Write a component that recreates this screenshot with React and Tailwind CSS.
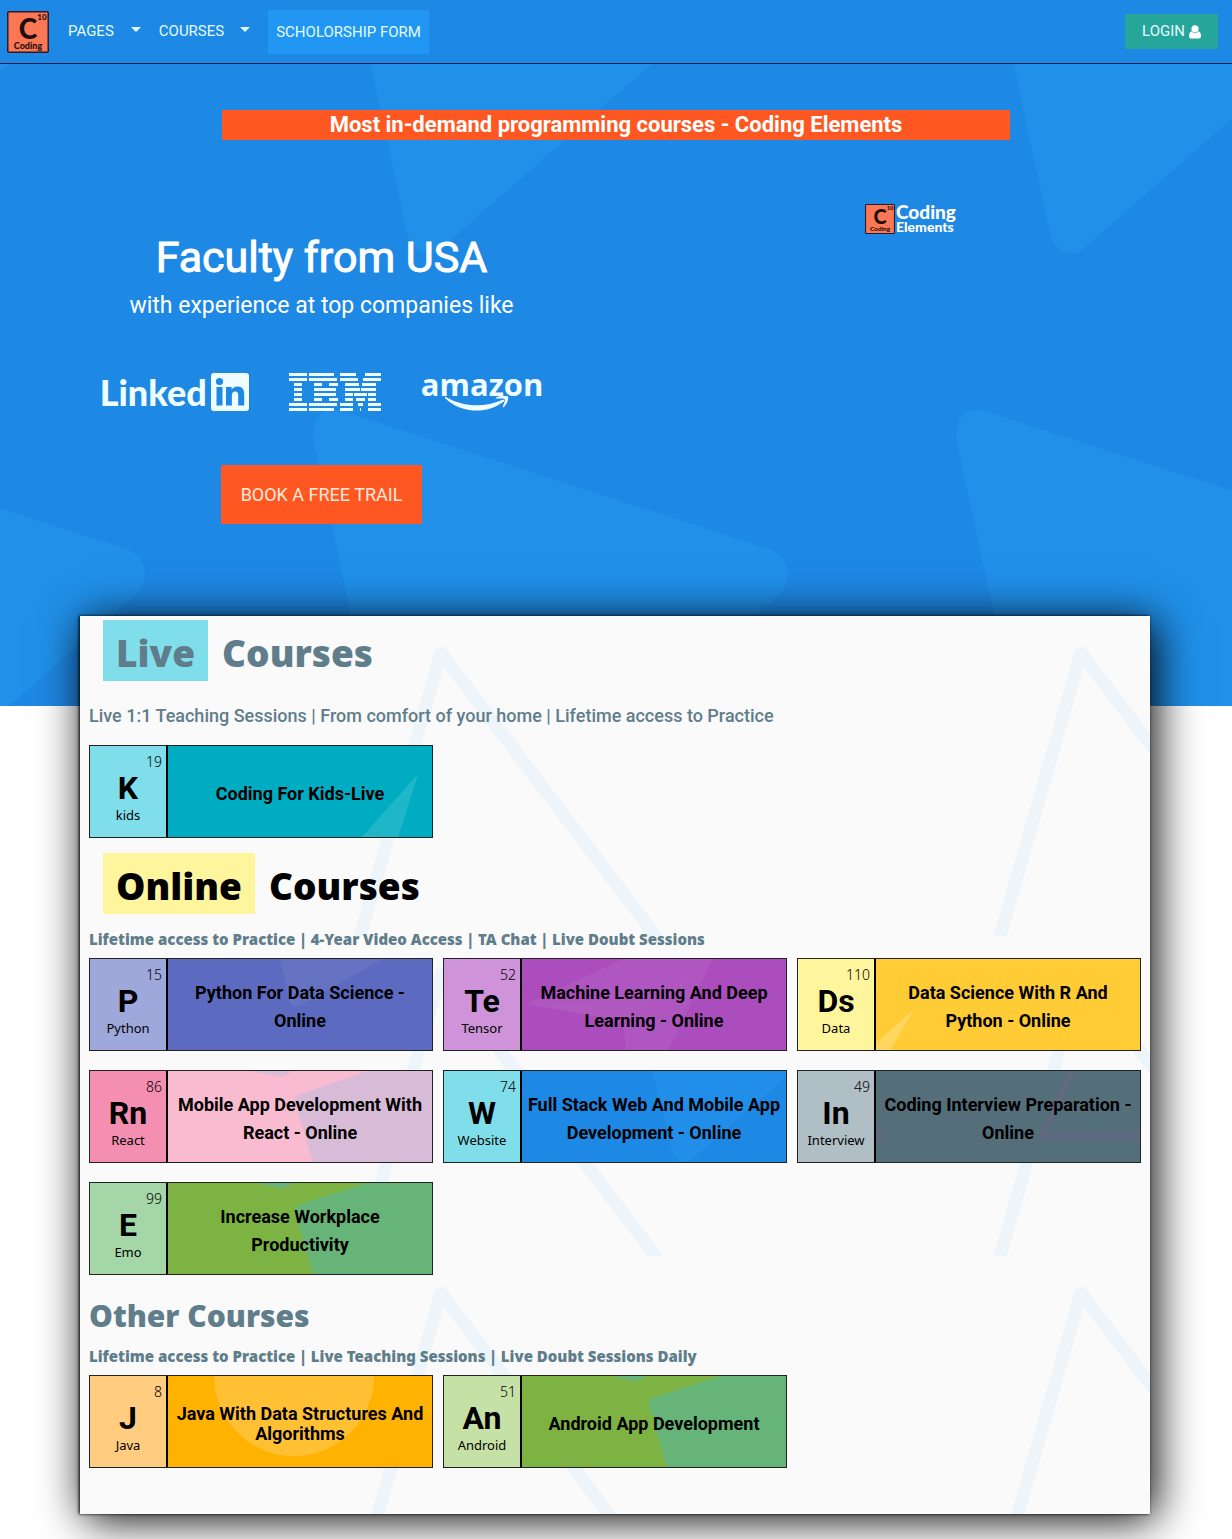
import React from "react";

const OVERLAYS = {
  shard: <path d="M250 28 L193 92 H230 Z" fill="#1fb6ca" />,
  wedge: <path d="M112 0 L122 43 Q125 51 133 46 L215 0 Z" fill="#6673c3" />,
  star: (
    <g fill="#b35fc4" fillOpacity="0.5">
      <path d="M4 45 L101 0 H191 L146 92 H104 L101 62 Z" />
      <path d="M191 0 L101 62 L4 45 L146 40 Z" fillOpacity="0.3" />
    </g>
  ),
  corner: <path d="M38 50 L0 84 V92 H14 Z" fill="#ffd75e" />,
  pinkTile: (
    <path d="M199 0 L130 24 Q126 26 127 30 L145 92 H266 V0 Z M82 0 L112 5 Q118 6 124 0 Z" fill="#d8bbd6" />
  ),
  greenTile: (
    <path d="M199 0 L130 22 Q126 24 127 28 L145 92 H266 V0 Z M90 0 L112 5 Q118 6 124 0 Z" fill="#66b478" />
  ),
  sail: <path d="M130 0 L151 82 Q155 92 162 92 L170 88 L266 4 V0 Z" fill="#218fe9" />,
  outline: (
    <g stroke="#5f6a80" strokeWidth="7" fill="none">
      <path d="M196 0 L166 65 H266" />
      <path d="M0 57 L10 65 L0 72 Z" fill="#5f6a80" stroke="none" />
    </g>
  ),
  disc: <circle cx="126" cy="0" r="80" fill="#ffc034" />,
};

const LIVE = [
  { number: 19, symbol: "K", name: "kids", title: "Coding For Kids-Live", left: "bg-[#80deea]", right: "bg-[#00acc1]", art: "shard" },
];

const ONLINE = [
  { number: 15, symbol: "P", name: "Python", title: "Python For Data Science - Online", left: "bg-[#9fa8da]", right: "bg-[#5c6bc0]", art: "wedge" },
  { number: 52, symbol: "Te", name: "Tensor", title: "Machine Learning And Deep Learning - Online", left: "bg-[#ce93d8]", right: "bg-[#ab4dbc]", art: "star" },
  { number: 110, symbol: "Ds", name: "Data", title: "Data Science With R And Python - Online", left: "bg-[#fff59d]", right: "bg-[#ffcc35]", art: "corner" },
  { number: 86, symbol: "Rn", name: "React", title: "Mobile App Development With React - Online", left: "bg-[#f48fb1]", right: "bg-[#f8bbd0]", art: "pinkTile" },
  { number: 74, symbol: "W", name: "Website", title: "Full Stack Web And Mobile App Development - Online", left: "bg-[#80deea]", right: "bg-[#1e88e5]", art: "sail" },
  { number: 49, symbol: "In", name: "Interview", title: "Coding Interview Preparation - Online", left: "bg-[#b0bec5]", right: "bg-[#546e7a]", art: "outline" },
  { number: 99, symbol: "E", name: "Emo", title: "Increase Workplace Productivity", left: "bg-[#a5d6a7]", right: "bg-[#7cb342]", art: "greenTile" },
];

const OTHER = [
  { number: 8, symbol: "J", name: "Java", title: "Java With Data Structures And Algorithms", left: "bg-[#ffcc80]", right: "bg-[#ffb300]", art: "disc" },
  { number: 51, symbol: "An", name: "Android", title: "Android App Development", left: "bg-[#c5e1a5]", right: "bg-[#7cb342]", art: "greenTile" },
];

function ElementLogo({ className }) {
  return (
    <svg viewBox="0 0 42 42" className={className} role="img" aria-label="Coding Elements">
      <rect x="0.75" y="0.75" width="40.5" height="40.5" rx="1" fill="#fc7753" stroke="#2b1a2b" strokeWidth="1.5" />
      <g fill="#1c0f10" fontFamily="Lato, sans-serif" fontWeight="900">
        <text x="21" y="28" fontSize="28" textAnchor="middle">C</text>
        <text x="35" y="9" fontSize="8" textAnchor="middle">10</text>
        <text x="21" y="38" fontSize="9" textAnchor="middle">Coding</text>
      </g>
    </svg>
  );
}

function Caret() {
  return (
    <svg viewBox="0 0 10 5" className="mb-1 h-[5px] w-[10px]" aria-hidden="true">
      <path d="M0 0 H10 L5 5 Z" fill="currentColor" />
    </svg>
  );
}

function UserIcon() {
  return (
    <svg viewBox="0 0 12 14" className="h-[14px] w-3" fill="#fff" aria-hidden="true">
      <circle cx="6" cy="3.800" r="3.600" />
      <path d="M2.600 6.200 C3.500 7.500 4.700 8 6 8 C7.300 8 8.500 7.500 9.400 6.200 C11.400 6.700 12 8.800 12 11 C12 12.800 11.200 13.500 10 13.500 H2 C0.800 13.500 0 12.800 0 11 C0 8.800 0.600 6.700 2.600 6.200 Z" />
    </svg>
  );
}

function LinkedInLogo() {
  return (
    <div className="flex items-center gap-1" role="img" aria-label="LinkedIn">
      <span className="font-[Lato,sans-serif] text-[36px] leading-9 font-black">Linked</span>
      <svg viewBox="0 0 38 38" className="size-[38px]" aria-hidden="true">
        <rect width="38" height="38" rx="3" fill="currentColor" />
        <g fill="#1e88e5">
          <circle cx="8.5" cy="8.5" r="3.6" />
          <rect x="5.5" y="14" width="6" height="18.5" />
          <path d="M15 14h5.700v2.600c1-1.800 3-3.200 5.800-3.200 5.700 0 6.700 3.900 6.700 8.700v10.400h-6v-9.200c0-2.300 0-4.700-2.900-4.700s-3.400 2.200-3.400 4.500v9.400H15z" />
        </g>
      </svg>
    </div>
  );
}

const IBM_BARS = [
  [[0, 18], [20, 25], [51, 16], [76, 16]],
  [[0, 18], [20, 28], [51, 18], [74, 18]],
  [[5, 8], [25, 8], [40, 9], [56, 14], [73, 14]],
  [[5, 8], [25, 22], [56, 15], [72, 15]],
  [[5, 8], [25, 22], [56, 8], [65, 13], [79, 8]],
  [[5, 8], [25, 8], [40, 9], [56, 8], [67, 9], [79, 8]],
  [[0, 18], [20, 28], [51, 13], [69, 5], [79, 13]],
  [[0, 18], [20, 25], [51, 13], [71, 1], [79, 13]],
];

function IbmLogo() {
  return (
    <svg viewBox="0 0 92 38" className="h-[38px] w-[92px]" role="img" aria-label="IBM" fill="currentColor">
      {IBM_BARS.map((bars, row) =>
        bars.map(([x, w]) => <rect key={`${row}-${x}`} x={x} y={row * 5} width={w} height="3" />)
      )}
    </svg>
  );
}

function AmazonLogo() {
  return (
    <div className="flex flex-col items-center" role="img" aria-label="amazon">
      <span className="font-['Open_Sans',sans-serif] text-[31px] leading-6 font-bold">amazon</span>
      <svg viewBox="0 0 66 15" className="mr-2 h-[15px] w-[66px]" aria-hidden="true" fill="currentColor">
        <path d="M1 1 C18 11 39 12 57 4 C59 3 60 5 58 6 C41 19 15 17 0 2 C-0.500 1 0 0.500 1 1 Z" />
        <path d="M51 1.500 C55-0.500 61-0.500 63 0.500 C64 3 62 8 59 11 C58 11.500 57.500 11 58 10 C59 7 60.500 4 59.500 3 C58 2 54 2.500 52 2.500 C51 2.500 50.500 2 51 1.500 Z" />
      </svg>
    </div>
  );
}

function HeroPattern() {
  const d =
    "M345 412 L766 548 Q788 556 788 575 Q787 588 775 598 L447 885 Q436 896 428 896 Q411 892 407 875 L314 442 Q310 403 345 412 Z";
  return (
    <svg className="absolute inset-0 size-full" aria-hidden="true">
      <defs>
        <pattern id="hero-triangles" width="643" height="642" patternUnits="userSpaceOnUse">
          <g fill="#2090e9">
            <path d={d} transform="translate(0 -64)" />
            <path d={d} transform="translate(-643 -64)" />
            <path d={d} transform="translate(0 -706)" />
            <path d={d} transform="translate(-643 -706)" />
          </g>
        </pattern>
      </defs>
      <rect width="100%" height="100%" fill="url(#hero-triangles)" />
    </svg>
  );
}

function PanelPattern() {
  return (
    <svg className="absolute inset-0 size-full" aria-hidden="true">
      <defs>
        <pattern id="panel-peaks" width="640" height="320" patternUnits="userSpaceOnUse">
          <path d="M271 352 L361 37 L587 335" fill="none" stroke="#edf5fa" strokeWidth="13" strokeLinejoin="round" />
        </pattern>
      </defs>
      <rect width="100%" height="100%" fill="url(#panel-peaks)" />
    </svg>
  );
}

function CourseCard({ course, leading = "leading-7" }) {
  return (
    <a href="#course" className="flex h-[93px] border border-[#222] text-black">
      <div className={`flex w-[78px] shrink-0 flex-col border-r-2 border-black font-['Noto_Sans',sans-serif] text-[13px] font-normal ${course.left}`}>
        <span className="pt-1 pr-1 text-right text-sm leading-6 font-light">{course.number}</span>
        <span className="text-center font-[Roboto,sans-serif] text-[32px] leading-7 font-bold">{course.symbol}</span>
        <span className="text-center leading-[26px]">{course.name}</span>
      </div>
      <div className={`relative flex flex-1 items-center justify-center overflow-hidden ${course.right}`}>
        <svg viewBox="0 0 264 91" preserveAspectRatio="none" className="absolute inset-0 size-full" aria-hidden="true">
          {OVERLAYS[course.art]}
        </svg>
        <h3 className={`relative px-1 pt-1 text-center text-lg font-bold ${leading}`}>{course.title}</h3>
      </div>
    </a>
  );
}

function HighlightHeading({ mark, children, markClass, className }) {
  return (
    <h2 className={`flex gap-[14px] pl-[14px] font-['Noto_Sans',sans-serif] text-[37px] leading-[57px] font-black ${className}`}>
      <span className={`px-[13px] pt-1 ${markClass}`}>{mark}</span>
      <span className="pt-1">{children}</span>
    </h2>
  );
}

export default function App() {
  return (
    <div className="bg-white pb-[25px] font-[Roboto,sans-serif]">
      <header className="flex h-16 items-center border-b border-[#16204a] bg-[#1e88e5] pr-[14px] pl-[7px] text-[15px] text-[#e3fbff]">
        <a href="#home"><ElementLogo className="size-[42px]" /></a>
        <nav className="ml-[19px] flex items-center">
          <button type="button" className="flex items-center gap-[17px]">PAGES <Caret /></button>
          <button type="button" className="ml-[18px] flex items-center gap-[16px]">COURSES <Caret /></button>
          <a href="#scholarship" className="ml-[18px] bg-[#2196f3] px-2 leading-[44px]">SCHOLORSHIP FORM</a>
        </nav>
        <a href="#login" className="ml-auto flex items-center gap-1 bg-[#26a69a] px-[17px] leading-[35px]">
          LOGIN <UserIcon />
        </a>
      </header>

      <section className="relative h-[642px] bg-[#1e88e5] text-white">
        <HeroPattern />
        <div className="relative pt-[46px]">
          <h2 className="mx-auto w-[64%] bg-[#ff5722] text-center text-[22px] leading-[30px] font-bold">
            Most in-demand programming courses - Coding Elements
          </h2>
          <div className="grid grid-cols-2 px-[27px] pt-16">
            <div className="flex flex-col items-center pt-6">
              <h1 className="text-[43px] leading-[58px] [-webkit-text-stroke:1px]">Faculty from USA</h1>
              <p className="mt-1 text-[23px] leading-8">with experience at top companies like</p>
              <div className="mt-[50px] flex items-center gap-10 text-[#f0fdff]">
                <LinkedInLogo />
                <IbmLogo />
                <AmazonLogo />
              </div>
              <a href="#trial" className="mt-[54px] bg-[#ff5722] px-5 text-lg leading-[59px] text-[#ffe9dc]">BOOK A FREE TRAIL</a>
            </div>
            <div className="flex items-start justify-center">
              <ElementLogo className="size-[30px]" />
              <div className="flex flex-col pl-px font-[Lato,sans-serif] font-black">
                <span className="text-[19px] leading-4">Coding</span>
                <span className="text-sm leading-[14px]">Elements</span>
              </div>
            </div>
          </div>
        </div>
      </section>

      <main className="relative mt-[-90px] mr-[82px] ml-20 bg-[#fafafa] shadow-[5px_5px_42px_#000,-1px_0_3px_#000]">
        <PanelPattern />
        <div className="relative px-[9px] pt-1 pb-[46px]">
          <section className="text-[#607d8b]">
            <HighlightHeading mark="Live" markClass="bg-[#80deea]">Courses</HighlightHeading>
            <p className="mt-5 mb-[14px] text-lg leading-[30px] font-medium">
              Live 1:1 Teaching Sessions | From comfort of your home | Lifetime access to Practice
            </p>
            <div className="grid grid-cols-3 gap-[10px]">
              {LIVE.map((c) => <CourseCard key={c.title} course={c} />)}
            </div>
          </section>

          <section className="mt-[15px]">
            <HighlightHeading mark="Online" markClass="bg-[#fff59d]" className="text-black">Courses</HighlightHeading>
            <p className="mt-[13px] mb-[7px] font-['Noto_Sans',sans-serif] text-[15px] leading-6 font-black text-[#607d8b]">
              Lifetime access to Practice | 4-Year Video Access | TA Chat | Live Doubt Sessions
            </p>
            <div className="grid grid-cols-3 gap-x-[10px] gap-y-[19px]">
              {ONLINE.map((c) => <CourseCard key={c.title} course={c} />)}
            </div>
          </section>

          <section className="mt-[19px] font-['Noto_Sans',sans-serif] font-black text-[#607d8b]">
            <h2 className="text-[30px] leading-[44px]">Other Courses</h2>
            <p className="mt-[6px] mb-[7px] text-[15px] leading-6">
              Lifetime access to Practice | Live Teaching Sessions | Live Doubt Sessions Daily
            </p>
            <div className="grid grid-cols-3 gap-[10px] font-[Roboto,sans-serif]">
              {OTHER.map((c) => <CourseCard key={c.title} course={c} leading="leading-5" />)}
            </div>
          </section>
        </div>
      </main>
    </div>
  );
}
